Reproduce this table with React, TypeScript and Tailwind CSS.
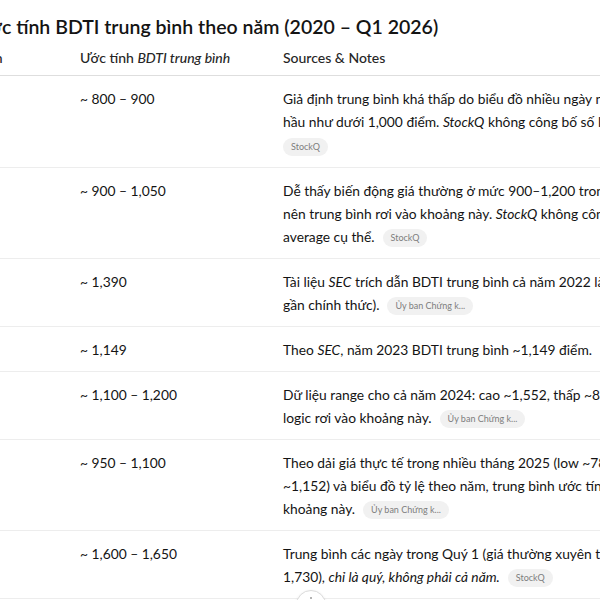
import React from "react";

type Row = {
  year: string;
  value: string;
  lines: React.ReactNode[];
  pill: string;
  pillOwnLine?: boolean;
};

function Pill({ label }: { label: string }) {
  return (
    <span className="inline-block h-[18px] rounded-full bg-[#f1f1f1] px-2 align-[1px] text-[9px] leading-[18px] text-[#7d7d7d]">
      {label}
    </span>
  );
}

const rows: Row[] = [
  {
    year: "2020",
    value: "~ 800 – 900",
    lines: [
      "Giả định trung bình khá thấp do biểu đồ nhiều ngày năm 2020 cho thấy BDTI",
      <>
        hầu như dưới 1,000 điểm. <i>StockQ</i> không công bố số liệu trung bình năm.
      </>,
    ],
    pill: "StockQ",
    pillOwnLine: true,
  },
  {
    year: "2021",
    value: "~ 900 – 1,050",
    lines: [
      "Dễ thấy biến động giá thường ở mức 900–1,200 trong năm 2021",
      <>
        nên trung bình rơi vào khoảng này. <i>StockQ</i> không công bố annual
      </>,
      "average cụ thể.",
    ],
    pill: "StockQ",
  },
  {
    year: "2022",
    value: "~ 1,390",
    lines: [
      <>
        Tài liệu <i>SEC</i> trích dẫn BDTI trung bình cả năm 2022 là ~1,390 (số liệu
      </>,
      "gần chính thức).",
    ],
    pill: "Ủy ban Chứng k...",
  },
  {
    year: "2023",
    value: "~ 1,149",
    lines: [
      <>
        Theo <i>SEC</i>, năm 2023 BDTI trung bình ~1,149 điểm.
      </>,
    ],
    pill: "Ủy ban Chứng k...",
  },
  {
    year: "2024",
    value: "~ 1,100 – 1,200",
    lines: [
      "Dữ liệu range cho cả năm 2024: cao ~1,552, thấp ~850, trung bình",
      "logic rơi vào khoảng này.",
    ],
    pill: "Ủy ban Chứng k...",
  },
  {
    year: "2025",
    value: "~ 950 – 1,100",
    lines: [
      "Theo dải giá thực tế trong nhiều tháng 2025 (low ~780, high",
      "~1,152) và biểu đồ tỷ lệ theo năm, trung bình ước tính rơi vào",
      "khoảng này.",
    ],
    pill: "Ủy ban Chứng k...",
  },
  {
    year: "Q1 2026",
    value: "~ 1,600 – 1,650",
    lines: [
      "Trung bình các ngày trong Quý 1 (giá thường xuyên trên 1,600–",
      <>
        1,730), <i>chỉ là quý, không phải cả năm.</i>
      </>,
    ],
    pill: "StockQ",
  },
];

export default function App() {
  return (
    <div
      className="relative h-[600px] w-[600px] overflow-hidden bg-white text-[#141414]"
      style={{ fontFamily: 'Lato, "Noto Sans", sans-serif' }}
    >
      <h2 className="ml-[-25px] whitespace-nowrap pt-[13px] text-[19.5px] font-semibold leading-[28px] text-[#141414]">
        Ước tính BDTI trung bình theo năm (2020 – Q1 2026)
      </h2>

      <div className="ml-[-98px] w-[1000px]">
        <div className="grid grid-cols-[178px_203px_619px] border-b border-[#dedede] text-[14px] font-medium leading-[22px] text-[#262626]">
          <div className="py-[6px]">Năm / Giai đoạn</div>
          <div className="py-[6px]">
            Ước tính <i>BDTI trung bình</i>
          </div>
          <div className="py-[6px]">Sources &amp; Notes</div>
        </div>

        {rows.map((r) => (
          <div
            key={r.year}
            className="grid grid-cols-[178px_203px_619px] border-b border-[#ededed] pb-[10px] pt-[11px] text-[13.8px] leading-[23px]"
          >
            <div>{r.year}</div>
            <div>{r.value}</div>
            <div className="whitespace-nowrap">
              {r.lines.map((l, i) => (
                <div key={i} className="h-[23px]">
                  {l}
                  {i === r.lines.length - 1 && !r.pillOwnLine && (
                    <span className="ml-2">
                      <Pill label={r.pill} />
                    </span>
                  )}
                </div>
              ))}
              {r.pillOwnLine && (
                <div className="h-[24px] pt-[1px]">
                  <Pill label={r.pill} />
                </div>
              )}
            </div>
          </div>
        ))}
      </div>

      {/* scroll-down button peeking at the bottom */}
      <div className="absolute left-[296px] top-[590px] flex h-[30px] w-[30px] justify-center rounded-full border border-[#dcdcdc] bg-white pt-[6px] shadow-sm">
        <span className="h-[2px] w-[2px] rounded-full bg-[#9a9a9a]" />
      </div>
    </div>
  );
}
